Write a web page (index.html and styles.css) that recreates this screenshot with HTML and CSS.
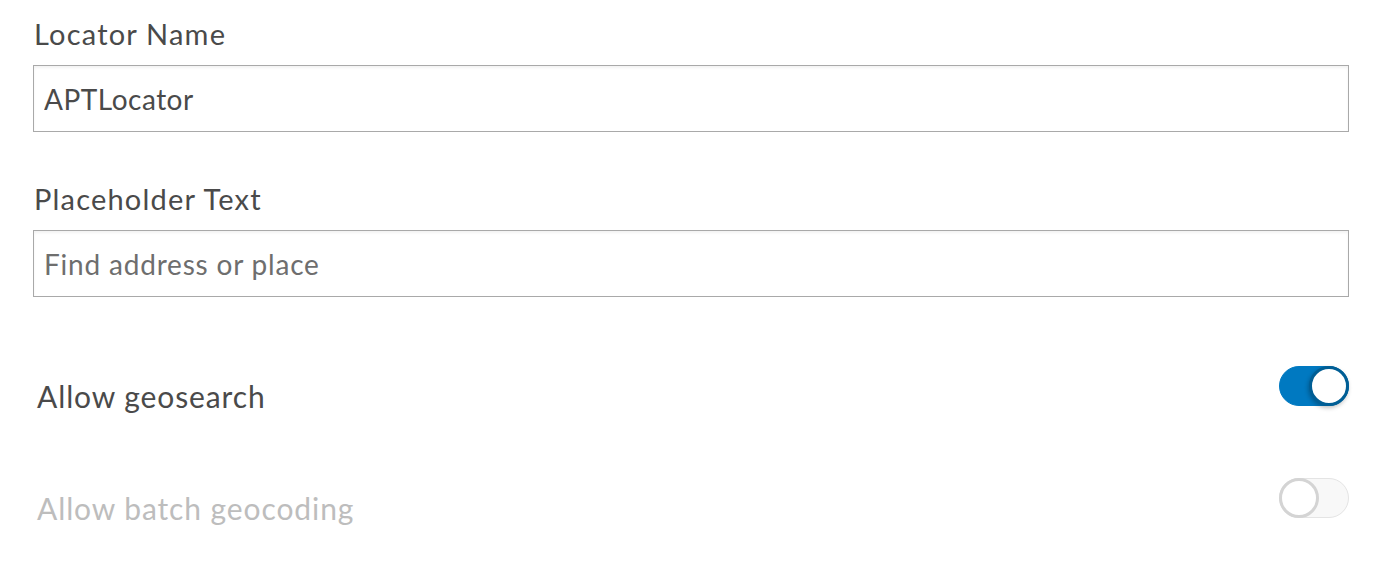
FILE: index.html
```html
<!DOCTYPE html>
<html lang="en">
<head>
<meta charset="utf-8">
<title>Locator settings</title>
<link rel="stylesheet" href="styles.css">
</head>
<body>
<main class="panel">
  <label class="field">
    <span class="field-label">Locator Name</span>
    <input class="text-input" type="text" value="APTLocator">
  </label>
  <label class="field">
    <span class="field-label">Placeholder Text</span>
    <input class="text-input" type="text" placeholder="Find address or place">
  </label>
  <div class="toggles">
    <div class="toggle-row">
      <span class="toggle-label">Allow geosearch</span>
      <span class="switch is-on"><span class="knob"></span></span>
    </div>
    <div class="toggle-row is-disabled">
      <span class="toggle-label">Allow batch geocoding</span>
      <span class="switch"><span class="knob"></span></span>
    </div>
  </div>
</main>
</body>
</html>
```
FILE: styles.css
```css
* { box-sizing: border-box; }
html, body { margin: 0; padding: 0; background: #fff; }
body {
  font-family: "Lato", "Noto Sans", sans-serif;
  color: #4a4a4a;
}
.panel {
  padding: 14px 30px 20px 33px;
  display: flex;
  flex-direction: column;
}
.field {
  display: flex;
  flex-direction: column;
  margin-bottom: 47px;
}
.field-label {
  font-size: 29px;
  letter-spacing: 1.2px;
  line-height: 40px;
  padding-left: 1px;
  margin-bottom: 11px;
  color: #4a4a4a;
}
.text-input {
  width: 100%;
  height: 67px;
  border: 1px solid #a9a9a9;
  box-shadow: inset 0 2px 3px rgba(0,0,0,0.05);
  padding: 0 10px;
  font-family: inherit;
  font-size: 28px;
  letter-spacing: 0.5px;
  color: #4a4a4a;
  outline: none;
  background: #fff;
}
.text-input::placeholder { color: #6e6e6e; opacity: 1; letter-spacing: 0.8px; }
.toggles {
  display: flex;
  flex-direction: column;
  gap: 62px;
  padding-top: 22px;
}
.toggle-row {
  display: flex;
  align-items: flex-start;
  justify-content: space-between;
  padding-left: 4px;
}
.toggle-label {
  font-size: 30px;
  letter-spacing: 0.9px;
  line-height: 40px;
  padding-top: 10px;
}
.is-disabled .toggle-label { color: #bdbdbd; }
.switch {
  position: relative;
  flex: none;
  width: 70px;
  height: 40px;
  border-radius: 20px;
  background: #f8f8f8;
  border: 1px solid #e4e4e4;
  display: inline-block;
}
.switch .knob {
  position: absolute;
  top: -1px;
  left: -1px;
  width: 40px;
  height: 40px;
  border-radius: 50%;
  background: #fff;
  border: 3px solid #d4d4d4;
}
.switch.is-on {
  background: #0079c1;
  border-color: #0079c1;
}
.switch.is-on .knob {
  left: auto;
  right: -1px;
  border-color: #005e95;
  box-shadow: -1px 2px 4px rgba(0,0,0,0.25);
}
```
